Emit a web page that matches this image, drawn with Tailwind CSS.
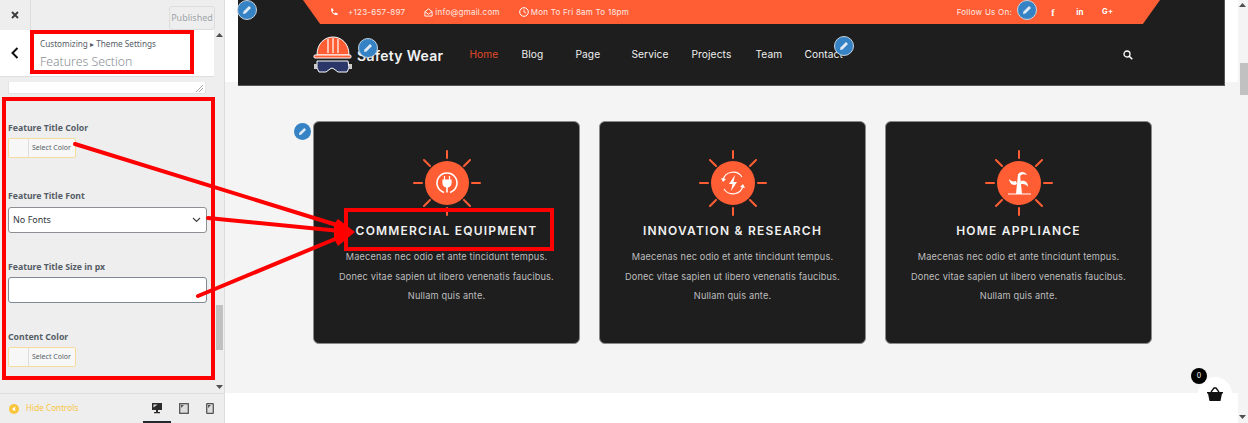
<!DOCTYPE html>
<html>
<head>
<meta charset="utf-8">
<script src="https://cdn.jsdelivr.net/npm/@tailwindcss/browser@4"></script>
</head>
<body class="bg-white">
<div class="relative flex w-[1248px] h-[423px] overflow-hidden bg-white font-['Inter',sans-serif]">

  <!-- Customizer sidebar -->
  <aside class="relative flex flex-col w-[225px] h-full shrink-0 bg-[#eeeeee] border-r border-[#dddddd] font-['Noto_Sans',sans-serif]">
    <div class="flex items-start h-[30px] shrink-0">
      <div class="flex items-center justify-center w-[31px] h-[30px] border-r border-[#dddddd] text-[#333]">
        <svg width="10" height="10" viewBox="0 0 10 10"><path d="M2 2l6 6M8 2l-6 6" stroke="#3a3a3a" stroke-width="1.8"/></svg>
      </div>
      <div class="ml-[138px] mt-[6px] w-[46px] h-[24px] flex items-center justify-center border border-[#dddddd] rounded-[3px] text-[9px] text-[#a0a5aa]">Published</div>
    </div>
    <div class="flex h-[47px] shrink-0 w-[214px] bg-white border-b border-[#dddddd]">
      <div class="flex items-center justify-center w-[30px] h-full">
        <svg width="8" height="12" viewBox="0 0 8 12"><path d="M6.500 1L1.500 6l5 5" fill="none" stroke="#111" stroke-width="2"/></svg>
      </div>
      <div class="pl-[10px] pt-[6px]">
        <div class="text-[8.200px] leading-[16px] text-[#555d66] whitespace-nowrap">Customizing ▸ Theme Settings</div>
        <div class="text-[12.300px] leading-[18px] font-light text-[#8a8f94] whitespace-nowrap mt-[1px]">Features Section</div>
      </div>
    </div>
    <div class="relative flex-1 min-h-0 pl-[8px] pr-[18px]">
      <div class="relative w-[198px] h-[12px] mt-[5px] bg-white border border-[#e4e4e4] border-t-0">
        <svg class="absolute right-[2px] bottom-[1px]" width="7" height="7" viewBox="0 0 7 7"><path d="M0 7L7 0M3 7l4-4" stroke="#aaa" stroke-width="1"/></svg>
      </div>
      <div class="mt-[28px] text-[8.700px] leading-[12px] font-bold text-[#555d66]">Feature Title Color</div>
      <div class="flex items-center w-[68px] h-[20px] mt-[4px] border border-[#f6dc9a] rounded-[2px] bg-[#f7f7f7]">
        <div class="w-[20px] h-full border-r border-[#dddddd]"></div>
        <div class="pl-[3px] text-[7px] text-[#555d66] whitespace-nowrap">Select Color</div>
      </div>
      <div class="mt-[32px] text-[8.700px] leading-[12px] font-bold text-[#555d66]">Feature Title Font</div>
      <div class="flex items-center justify-between w-[199px] h-[26px] mt-[5px] pl-[4px] pr-[5px] bg-white border border-[#8c8f94] rounded-[3px] text-[9px] text-[#32373c]">
        <span>No Fonts</span>
        <svg width="9" height="6" viewBox="0 0 9 6"><path d="M1 1l3.500 3.500L8 1" fill="none" stroke="#444" stroke-width="1.200"/></svg>
      </div>
      <div class="mt-[28px] text-[8.700px] leading-[12px] font-bold text-[#555d66]">Feature Title Size in px</div>
      <div class="w-[199px] h-[26px] mt-[4px] bg-white border border-[#7e8993] rounded-[3px]"></div>
      <div class="mt-[28px] text-[8.700px] leading-[12px] font-bold text-[#555d66]">Content Color</div>
      <div class="flex items-center w-[68px] h-[20px] mt-[4px] border border-[#f6dc9a] rounded-[2px] bg-[#f7f7f7]">
        <div class="w-[20px] h-full border-r border-[#dddddd]"></div>
        <div class="pl-[3px] text-[7px] text-[#555d66] whitespace-nowrap">Select Color</div>
      </div>
      <!-- customizer scrollbar -->
      <div class="absolute right-0 top-[-47px] bottom-0 w-[10px]">
        <div class="absolute left-[2px] bottom-[43px] w-[7px] h-[45px] bg-[#c1c1c1]"></div>
        <svg class="absolute left-[2px] top-[3px]" width="7" height="5" viewBox="0 0 7 5"><path d="M3.500 0L7 4H0z" fill="#505050"/></svg>
        <svg class="absolute left-[2px] bottom-[3px]" width="7" height="5" viewBox="0 0 7 5"><path d="M0 0h7L3.500 4z" fill="#505050"/></svg>
      </div>
    </div>
    <div class="relative flex items-center h-[30px] shrink-0 border-t border-[#dddddd] pl-[9px]">
      <svg width="10" height="10" viewBox="0 0 10 10"><circle cx="5" cy="5" r="5" fill="#f9c53c"/><path d="M6.200 2.500L3 5l3.200 2.500z" fill="#fff"/></svg>
      <span class="ml-[7px] text-[8.200px] text-[#f9c53c] whitespace-nowrap">Hide Controls</span>
      <div class="absolute left-[143px] top-0 bottom-0 w-[28px] border-b-[2px] border-[#23282d] flex items-center justify-center">
        <svg width="12" height="12" viewBox="0 0 12 12"><path d="M1 1h10v7H1z" fill="#2b2b2b"/><path d="M2.500 2.500h4l-4 3z" fill="#ddd"/><path d="M5 8h2v2h2v1.200H3V10h2z" fill="#2b2b2b"/></svg>
      </div>
      <svg class="absolute left-[179px] top-[9px]" width="10" height="11" viewBox="0 0 10 11"><rect x="0.700" y="0.700" width="8.600" height="9.600" fill="#ddd" stroke="#555" stroke-width="1.300"/><path d="M2 2h3L2 5z" fill="#555"/></svg>
      <svg class="absolute left-[206px] top-[9px]" width="8" height="11" viewBox="0 0 8 11"><rect x="0.700" y="0.500" width="6.600" height="10" rx="1" fill="#ddd" stroke="#555" stroke-width="1.300"/><path d="M2 2h3L2 5z" fill="#555"/></svg>
    </div>
  </aside>

  <!-- Preview -->
  <main class="relative flex flex-col w-[1013px] h-full shrink-0 bg-white">
    <div class="relative h-[82px] shrink-0 px-[13px]">
      <header class="relative z-10 h-[86px] bg-[#1e1e1e] border-b border-r border-[#555] text-white">
        <div class="flex items-center justify-between h-[24px] ml-[65px] w-[857px] pl-[27px] pr-[48px] bg-[#ff5e35] text-[8px] tracking-[0.25px] text-[#ffe9e2] [clip-path:polygon(0_0,100%_0,98%_100%,2%_100%)]">
          <div class="flex items-center">
            <svg width="8" height="8" viewBox="0 0 10 10"><path d="M1.500 0.500l2 0 1 3-1.500 1a6 6 0 0 0 2.500 2.500l1-1.500 3 1v2c-4 1.500-9-3.500-8-8z" fill="#fff"/></svg>
            <span class="ml-[10px]">+123-657-897</span>
            <svg class="ml-[19px]" width="9" height="9" viewBox="0 0 10 10"><path d="M1 4l4-3 4 3v5H1zM1 4l4 3 4-3" fill="none" stroke="#fff" stroke-width="1"/></svg>
            <span class="ml-[2px]">info@gmail.com</span>
            <svg class="ml-[19px]" width="10" height="10" viewBox="0 0 10 10"><circle cx="5" cy="5" r="4.300" fill="none" stroke="#fff"/><path d="M5 2.500V5l2 1" fill="none" stroke="#fff" stroke-width=".9"/></svg>
            <span class="ml-[2px]">Mon To Fri 8am To 18pm</span>
          </div>
          <div class="flex items-center">
            <span>Follow Us On:</span>
            <span class="ml-[36px] w-[10px] text-center font-bold text-[10px] text-white font-['Liberation_Serif',serif]">f</span>
            <span class="ml-[17px] w-[10px] text-center font-bold text-white">in</span>
            <span class="ml-[17px] w-[10px] text-center font-bold text-[7.500px] text-white whitespace-nowrap">G+</span>
          </div>
        </div>
        <div class="flex items-center h-[61px] pl-[75px] pt-[1px]">
          <svg class="shrink-0" width="40" height="40" viewBox="0 0 40 40">
            <path d="M4 20C4 8 12 2 20 2s16 6 16 18z" fill="#ff5e35" stroke="#fff" stroke-width="1"/>
            <path d="M15 4v14M20 3v15M25 4v14" stroke="#fff" stroke-width="1.200"/>
            <rect x="1" y="20" width="37" height="3" rx="1" fill="#ff5e35" stroke="#fff"/>
            <path d="M4 26h31l1 7-2 4h-9l-4-3-2-1-2 1-4 3H6l-2-4z" fill="#2a3768" stroke="#fff" stroke-width="1"/>
            <rect x="1" y="29" width="3" height="5" fill="#ccc"/><rect x="36" y="29" width="3" height="5" fill="#ccc"/>
          </svg>
          <span class="ml-[4px] text-[14px] font-semibold tracking-[0.3px] text-[#f2f2f2] whitespace-nowrap">Safety Wear</span>
          <nav class="flex ml-[26px] text-[10.200px] text-[#f0f0f0] whitespace-nowrap tracking-[0.1px]">
            <span class="w-[52px] text-[#e3492a]">Home</span>
            <span class="w-[54px]">Blog</span>
            <span class="w-[56px]">Page</span>
            <span class="w-[60px]">Service</span>
            <span class="w-[64px]">Projects</span>
            <span class="w-[49px]">Team</span>
            <span>Contact</span>
          </nav>
          <svg class="ml-[280px]" width="10" height="10" viewBox="0 0 10 10"><circle cx="4" cy="4" r="3" fill="none" stroke="#fff" stroke-width="1.300"/><path d="M6.200 6.200L9.300 9.300" stroke="#fff" stroke-width="1.600"/></svg>
        </div>
      </header>
    </div>
    <section class="flex justify-center gap-[19px] h-[311px] shrink-0 pt-[39px] pl-[2px] bg-[#f4f4f4]">
      <article class="flex flex-col items-center w-[267px] h-[223px] bg-[#1e1e1e] border border-[#8a8a8a] rounded-[6px]">
        <svg class="mt-[21px]" width="80" height="80" viewBox="-40 -40 80 80">
          <g stroke="#ff5e35" stroke-width="2" stroke-linecap="round"><path d="M0-25v-7M0 25v7M-25 0h-8M25 0h8M-17-17l-6-6M17-17l6-6M-17 17l-6 6M17 17l6 6"/></g>
          <circle r="22" fill="#ff5e35"/>
          <g fill="none" stroke="#fff" stroke-width="1.600"><path d="M-3 9.500A10 10 0 1 1 3 9.500"/><path d="M0 3v6.500"/></g>
          <path d="M-4-3h8v3a4 4 0 0 1-8 0zM-2.500-7v4M2.500-7v4" fill="#fff" stroke="#fff" stroke-width="1.200"/>
        </svg>
        <h3 class="mt-0 text-[12px] leading-[16px] font-semibold tracking-[1.200px] text-[#f0f0f0] whitespace-nowrap">COMMERCIAL EQUIPMENT</h3>
        <div class="mt-[8px] text-center text-[9.200px] leading-[19.500px] tracking-[0.150px] text-[#bdbdbd] whitespace-nowrap">
          <p>Maecenas nec odio et ante tincidunt tempus.</p>
          <p>Donec vitae sapien ut libero venenatis faucibus.</p>
          <p>Nullam quis ante.</p>
        </div>
      </article>
      <article class="flex flex-col items-center w-[267px] h-[223px] bg-[#1e1e1e] border border-[#8a8a8a] rounded-[6px]">
        <svg class="mt-[21px]" width="80" height="80" viewBox="-40 -40 80 80">
          <g stroke="#ff5e35" stroke-width="2" stroke-linecap="round"><path d="M0-25v-7M0 25v7M-25 0h-8M25 0h8M-17-17l-6-6M17-17l6-6M-17 17l-6 6M17 17l6 6"/></g>
          <circle r="22" fill="#ff5e35"/>
          <g fill="none" stroke="#fff" stroke-width="1.100"><path d="M-10-3A10.500 10.500 0 0 1 9-6"/><path d="M10 3A10.500 10.500 0 0 1-9 6"/></g>
          <path d="M2-8l-6 9h3.500L-2 8l6-9H0.500z" fill="#fff"/>
          <path d="M-12-5l5 1-3 3zM12 5l-5-1 3-3z" fill="#fff"/>
        </svg>
        <h3 class="mt-0 text-[12px] leading-[16px] font-semibold tracking-[1.200px] text-[#f0f0f0] whitespace-nowrap">INNOVATION &amp; RESEARCH</h3>
        <div class="mt-[8px] text-center text-[9.200px] leading-[19.500px] tracking-[0.150px] text-[#bdbdbd] whitespace-nowrap">
          <p>Maecenas nec odio et ante tincidunt tempus.</p>
          <p>Donec vitae sapien ut libero venenatis faucibus.</p>
          <p>Nullam quis ante.</p>
        </div>
      </article>
      <article class="flex flex-col items-center w-[267px] h-[223px] bg-[#1e1e1e] border border-[#8a8a8a] rounded-[6px]">
        <svg class="mt-[21px]" width="80" height="80" viewBox="-40 -40 80 80">
          <g stroke="#ff5e35" stroke-width="2" stroke-linecap="round"><path d="M0-25v-7M0 25v7M-25 0h-8M25 0h8M-17-17l-6-6M17-17l6-6M-17 17l-6 6M17 17l6 6"/></g>
          <circle r="22" fill="#ff5e35"/>
          <path d="M-11 11h23" stroke="#fff" stroke-width="1"/>
          <path d="M-3 11L-1-9h2L3 11z" fill="#fff"/>
          <path d="M-1-8C0-12 6-12 8-8 5-9 3-9 1-7z" fill="#fff"/>
          <path d="M-2 1C-5 3-9 2-10-4-8-2-6-1-3-2z" fill="#fff"/>
          <path d="M2-2C6-3 9-1 9 4 7 1 5 1 2 1z" fill="#fff"/>
        </svg>
        <h3 class="mt-0 text-[12px] leading-[16px] font-semibold tracking-[1.200px] text-[#f0f0f0] whitespace-nowrap">HOME APPLIANCE</h3>
        <div class="mt-[8px] text-center text-[9.200px] leading-[19.500px] tracking-[0.150px] text-[#bdbdbd] whitespace-nowrap">
          <p>Maecenas nec odio et ante tincidunt tempus.</p>
          <p>Donec vitae sapien ut libero venenatis faucibus.</p>
          <p>Nullam quis ante.</p>
        </div>
      </article>
    </section>
    <div class="flex-1 bg-white"></div>
  </main>

  <!-- Page scrollbar -->
  <div class="relative w-[10px] h-full bg-[#f4f4f4]">
    <svg class="absolute left-[1px] top-[3px]" width="7" height="5" viewBox="0 0 7 5"><path d="M3.500 0L7 4H0z" fill="#505050"/></svg>
    <div class="absolute left-[2px] top-[63px] w-[8px] h-[32px] bg-[#c1c1c1]"></div>
    <svg class="absolute left-[1px] bottom-[3px]" width="7" height="5" viewBox="0 0 7 5"><path d="M0 0h7L3.500 4z" fill="#505050"/></svg>
  </div>

  <!-- Edit pencils -->
  <div class="absolute left-[237px] top-[0px] z-20 flex items-center justify-center w-[20px] h-[20px] rounded-full bg-[#3582c4] border border-[#c8d4de]"><svg width="10" height="10" viewBox="0 0 10 10"><path d="M7 1l2 2-5.500 5.500L1 9l.5-2.500z" fill="#dfeaf5"/></svg></div>
  <div class="absolute left-[358px] top-[38px] z-20 flex items-center justify-center w-[20px] h-[20px] rounded-full bg-[#3582c4] border border-[#c8d4de]"><svg width="10" height="10" viewBox="0 0 10 10"><path d="M7 1l2 2-5.500 5.500L1 9l.5-2.500z" fill="#dfeaf5"/></svg></div>
  <div class="absolute left-[834px] top-[36px] z-20 flex items-center justify-center w-[20px] h-[20px] rounded-full bg-[#3582c4] border border-[#c8d4de]"><svg width="10" height="10" viewBox="0 0 10 10"><path d="M7 1l2 2-5.500 5.500L1 9l.5-2.500z" fill="#dfeaf5"/></svg></div>
  <div class="absolute left-[1017px] top-[0px] z-20 flex items-center justify-center w-[20px] h-[20px] rounded-full bg-[#3582c4] border border-[#c8d4de]"><svg width="10" height="10" viewBox="0 0 10 10"><path d="M7 1l2 2-5.500 5.500L1 9l.5-2.500z" fill="#dfeaf5"/></svg></div>
  <div class="absolute left-[294px] top-[123px] z-20 flex items-center justify-center w-[17px] h-[17px] rounded-full bg-[#3582c4]"><svg width="9" height="9" viewBox="0 0 10 10"><path d="M7 1l2 2-5.500 5.500L1 9l.5-2.500z" fill="#dfeaf5"/></svg></div>

  <!-- Cart -->
  <div class="absolute left-[1198px] top-[377px] z-20 flex items-center justify-center w-[34px] h-[34px] rounded-full bg-white">
    <svg width="16" height="14" viewBox="0 0 16 14"><path d="M0 5h16v1.500h-1L13.500 14h-11L1 6.500H0z" fill="#111"/><path d="M4 5l3-4h2l3 4" fill="none" stroke="#111" stroke-width="1.300"/></svg>
  </div>
  <div class="absolute left-[1191px] top-[368px] z-30 flex items-center justify-center w-[16px] h-[16px] rounded-full bg-black text-[7px] text-white">0</div>

  <!-- Red annotations -->
  <div class="absolute left-[30px] top-[30px] z-40 w-[164px] h-[44px] border-[4px] border-[#ff0000]"></div>
  <div class="absolute left-[2px] top-[97px] z-40 w-[213px] h-[283px] border-[4px] border-[#ff0000]"></div>
  <div class="absolute left-[344px] top-[208px] z-40 w-[210px] h-[43px] border-[4px] border-[#ff0000]"></div>
  <svg class="absolute left-0 top-0 z-40" width="1248" height="423" viewBox="0 0 1248 423">
    <g stroke="#ff0000" stroke-width="4" fill="none" stroke-linecap="round">
      <path d="M75 144L340 226"/>
      <path d="M208 218L340 231"/>
      <path d="M198 296L340 237"/>
    </g>
    <path d="M338 219L355 232L338 246L334 239L334 224z" fill="#ff0000"/>
  </svg>
</div>
</body>
</html>
